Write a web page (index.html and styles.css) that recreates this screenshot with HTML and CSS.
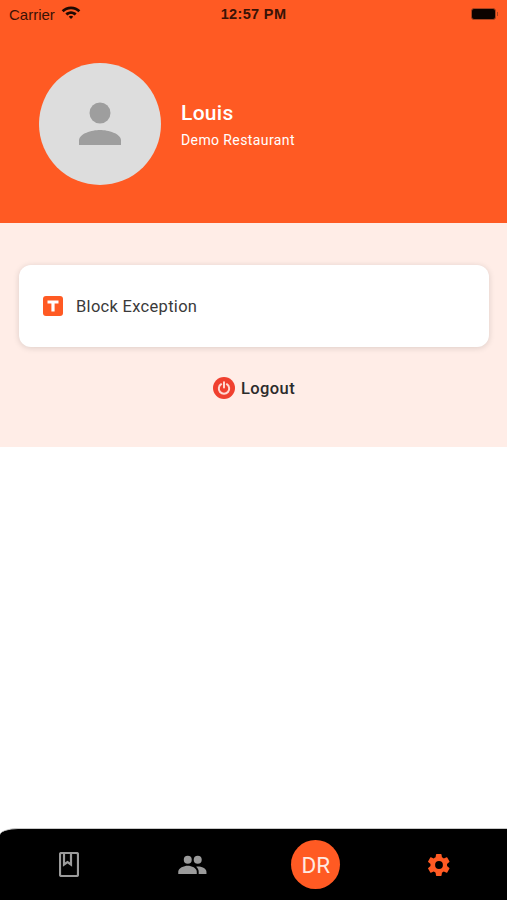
FILE: index.html
```html
<!DOCTYPE html>
<html lang="en">

<head>
    <meta charset="UTF-8">
    <meta name="viewport" content="width=device-width, initial-scale=1.0">
    <title>Profile</title>
    <link rel="stylesheet" href="styles.css">
</head>

<body>
    <div class="app">
        <header class="header">
            <div class="status-bar">
                <div class="status-left">
                    <span class="carrier">Carrier</span>
                    <svg class="wifi" width="20" height="15" viewBox="0 0 20 15">
                        <path d="M10 1.5C6.4 1.5 3.1 2.9.7 5.2l1.9 2C4.5 5.3 7.1 4.2 10 4.2s5.5 1.1 7.4 3l1.9-2C16.9 2.9 13.6 1.5 10 1.5z" />
                        <path d="M10 6.3c-2.2 0-4.2.9-5.6 2.3l1.9 2c.9-.9 2.3-1.5 3.7-1.5s2.8.6 3.7 1.5l1.9-2C14.2 7.2 12.2 6.3 10 6.3z" />
                        <path d="M10 10.8c-.9 0-1.7.4-2.2.9l2.2 2.3 2.2-2.3c-.5-.5-1.3-.9-2.2-.9z" />
                    </svg>
                </div>
                <span class="time">12:57 PM</span>
                <div class="battery">
                    <div class="battery-body"></div>
                    <div class="battery-tip"></div>
                </div>
            </div>
            <div class="profile">
                <div class="avatar">
                    <svg width="44" height="44" viewBox="0 0 44 44">
                        <circle cx="22" cy="11" r="10.5" />
                        <path d="M1 43v-4.5C1 31.5 14 28 22 28s21 3.5 21 10.5V43z" />
                    </svg>
                </div>
                <div class="profile-text">
                    <div class="profile-name">Louis</div>
                    <div class="profile-place">Demo Restaurant</div>
                </div>
            </div>
        </header>

        <section class="actions">
            <div class="card">
                <div class="card-icon">
                    <svg width="12" height="12" viewBox="0 0 12 12">
                        <path d="M.5 .5h11v3H7.6v8H4.4v-8H.5z" />
                    </svg>
                </div>
                <span class="card-label">Block Exception</span>
            </div>
            <div class="logout">
                <div class="logout-icon">
                    <svg width="14" height="14" viewBox="0 0 14 14">
                        <path d="M4.2 3.2a5.2 5.2 0 1 0 5.6 0" />
                        <path d="M7 1.3v5.2" />
                    </svg>
                </div>
                <span>Logout</span>
            </div>
        </section>

        <main class="blank"></main>

        <nav class="tabbar">
            <div class="tab">
                <svg width="20" height="25" viewBox="0 0 20 25" class="tab-book">
                    <rect x="1" y="1" width="18" height="23" rx="1.5" />
                    <path d="M5 1v11.5l3.5-2.5 3.500 2.500V1" />
                </svg>
            </div>
            <div class="tab">
                <svg width="29" height="19" viewBox="0 0 30 20" class="tab-people">
                    <circle cx="10" cy="5" r="4.2" />
                    <circle cx="20.5" cy="5" r="4.2" />
                    <path d="M0 20v-2.5C0 13.5 6 11.2 10 11.2s9.5 2.3 9.5 6.3V20z" />
                    <path d="M21.5 20v-2.5c0-2.2-1-3.9-2.7-5.2.7-.1 1.3-.2 1.900-.2 3.500 0 9 2 9 5.400V20z" />
                </svg>
            </div>
            <div class="tab">
                <div class="tab-avatar">DR</div>
            </div>
            <div class="tab">
                <svg width="26" height="26" viewBox="0 0 24 24" class="tab-gear">
                    <path d="M19.4 13c.04-.32.06-.66.06-1s-.02-.68-.07-1l2.160-1.680a.5.5 0 0 0 .12-.64l-2.050-3.540a.5.5 0 0 0-.62-.22l-2.550 1.020a7.500 7.500 0 0 0-1.730-1l-.38-2.710a.5.500 0 0 0-.5-.43h-4.100a.5.5 0 0 0-.5.430l-.38 2.710c-.62.26-1.200.6-1.730 1L4.580 4.920a.5.5 0 0 0-.62.220L1.910 8.680a.5.500 0 0 0 .12.640L4.190 11c-.05.320-.08.670-.08 1s.03.680.08 1l-2.160 1.680a.5.500 0 0 0-.12.640l2.050 3.540c.13.220.39.300.62.220l2.550-1.020c.53.400 1.110.74 1.730 1l.38 2.710c.04.250.25.430.5.430h4.100c.25 0 .46-.18.500-.43l.38-2.710c.62-.26 1.200-.6 1.730-1l2.550 1.020c.23.080.49 0 .62-.22l2.050-3.540a.5.500 0 0 0-.12-.64zM12 15.600a3.600 3.600 0 1 1 0-7.200 3.600 3.600 0 0 1 0 7.200z" />
                </svg>
            </div>
        </nav>
    </div>
</body>

</html>
```

FILE: styles.css
```css
body {
    font-family: Roboto, "Liberation Sans", sans-serif;
    background-color: #ffffff;
    margin: 0;
}

.app {
    display: flex;
    flex-direction: column;
    height: 900px;
    overflow: hidden;
}

.header {
    height: 223px;
    background-color: #ff5a23;
}

.status-bar {
    display: flex;
    align-items: center;
    justify-content: space-between;
    height: 28px;
    padding: 0 9px;
    color: #3a1206;
    font-family: "Liberation Sans", Arial, sans-serif;
}

.status-left {
    display: flex;
    align-items: center;
    gap: 6px;
    width: 110px;
}

.carrier {
    font-size: 15px;
}

.wifi {
    fill: #1f0a03;
    margin-top: -3px;
}

.time {
    font-size: 14.5px;
    font-weight: bold;
    letter-spacing: 0.35px;
}

.battery {
    display: flex;
    align-items: center;
    justify-content: flex-end;
    width: 110px;
    gap: 1px;
}

.battery-body {
    width: 23px;
    height: 10px;
    background-color: #0c0300;
    border: 1px solid #a8431f;
    border-radius: 3px;
}

.battery-tip {
    width: 1px;
    height: 4px;
    background-color: #a8431f;
}

.profile {
    display: flex;
    align-items: center;
    gap: 20px;
    padding: 35px 0 0 39px;
}

.avatar {
    display: flex;
    align-items: center;
    justify-content: center;
    width: 122px;
    height: 122px;
    background-color: #dddddd;
    border-radius: 50%;
}

.avatar svg {
    fill: #9e9e9e;
}

.profile-text {
    color: #ffffff;
}

.profile-name {
    font-size: 21px;
    font-weight: 500;
    letter-spacing: 0.3px;
    margin-bottom: 7px;
}

.profile-place {
    font-size: 14px;
    letter-spacing: 0.4px;
}

.actions {
    height: 224px;
    box-sizing: border-box;
    padding: 42px 18px 0 19px;
    background-color: #ffede7;
}

.card {
    display: flex;
    align-items: center;
    gap: 13px;
    height: 82px;
    box-sizing: border-box;
    padding-left: 24px;
    background-color: #ffffff;
    border-radius: 12px;
    box-shadow: 0 1px 6px rgba(0, 0, 0, 0.14);
}

.card-icon {
    display: flex;
    align-items: center;
    justify-content: center;
    width: 20px;
    height: 20px;
    background-color: #ff5a23;
    border-radius: 3px;
}

.card-icon svg {
    fill: #ffffff;
}

.card-label {
    font-size: 16.5px;
    letter-spacing: 0.3px;
    color: #3a3a3a;
}

.logout {
    display: flex;
    align-items: center;
    justify-content: center;
    gap: 6px;
    margin-top: 30px;
    font-size: 16.5px;
    font-weight: 500;
    letter-spacing: 0.4px;
    color: #2b2b2b;
}

.logout-icon {
    display: flex;
    align-items: center;
    justify-content: center;
    width: 22px;
    height: 22px;
    background-color: #f0402f;
    border-radius: 50%;
}

.logout-icon svg {
    fill: none;
    stroke: #ffd9d2;
    stroke-width: 2;
    stroke-linecap: round;
}

.blank {
    flex: 1;
}

.tabbar {
    display: flex;
    height: 71px;
    padding: 0 6px 0 7px;
    background-color: #000000;
    border-top: 1px solid #c8c8c8;
    border-top-left-radius: 18px 7px;
}

.tab {
    flex: 1;
    display: flex;
    align-items: center;
    justify-content: center;
}

.tab-book {
    fill: none;
    stroke: #9b9b9b;
    stroke-width: 2.2;
}

.tab-people {
    fill: #9b9b9b;
}

.tab-gear {
    fill: #ff5a23;
}

.tab-avatar {
    width: 49px;
    height: 49px;
    line-height: 50px;
    text-align: center;
    font-size: 22.5px;
    color: #ffe9e2;
    background-color: #ff5a23;
    border-radius: 50%;
}
```
